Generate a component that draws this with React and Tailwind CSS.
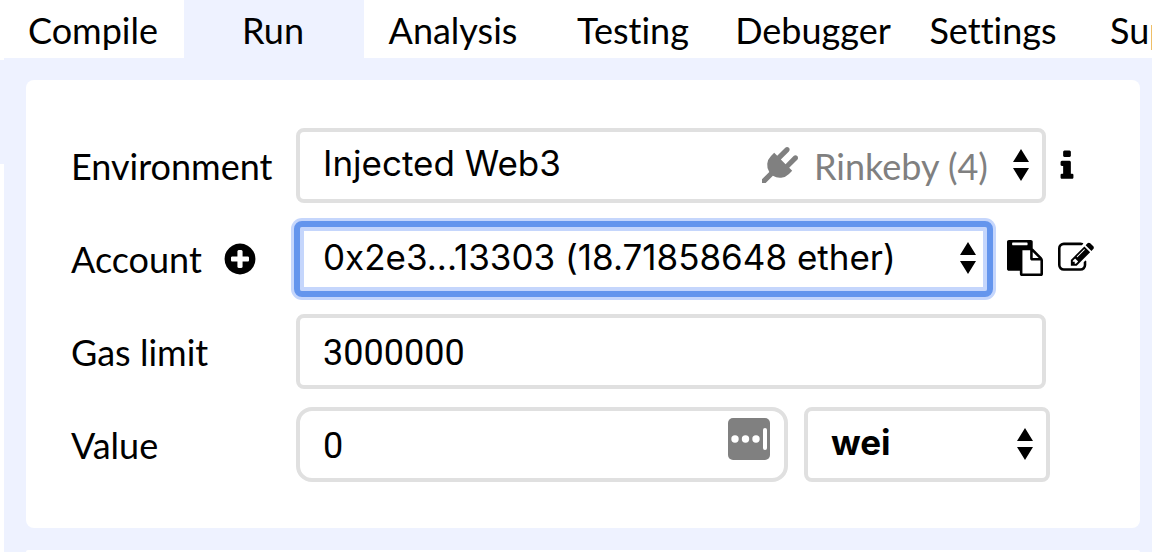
import React from 'react';

const ICONS = {
  info: 'M1216 1344v128q0 26-19 45t-45 19h-512q-26 0-45-19t-19-45v-128q0-26 19-45t45-19h64v-384h-64q-26 0-45-19t-19-45v-128q0-26 19-45t45-19h384q26 0 45 19t19 45v576h64q26 0 45 19t19 45zm-128-1152v192q0 26-19 45t-45 19h-256q-26 0-45-19t-19-45v-192q0-26 19-45t45-19h256q26 0 45 19t19 45z',
  plus: 'M1344 960v-128q0-26-19-45t-45-19h-256v-256q0-26-19-45t-45-19h-128q-26 0-45 19t-19 45v256h-256q-26 0-45 19t-19 45v128q0 26 19 45t45 19h256v256q0 26 19 45t45 19h128q26 0 45-19t19-45v-256h256q26 0 45-19t19-45zm320-64q0 209-103 385.5t-279.5 279.5-385.5 103-385.5-103-279.5-279.5-103-385.5 103-385.5 279.5-279.5 385.5-103 385.5 103 279.5 279.5 103 385.5z',
  plug: 'M1755 453q37 38 37 90.5t-37 90.5l-401 400 150 150-160 160q-163 163-389.5 186.5t-411.5-100.5l-362 362h-181v-181l362-362q-124-185-100.5-411.5t186.5-389.5l160-160 150 150 400-401q38-37 91-37t90 37 37 90.5-37 90.5l-400 401 234 234 401-400q38-37 91-37t90 37z',
  paste: 'M768 1664h896v-640h-416q-40 0-68-28t-28-68v-416h-384v1152zm256-1440v-64q0-13-9.5-22.5t-22.5-9.5h-704q-13 0-22.5 9.5t-9.5 22.5v64q0 13 9.5 22.5t22.5 9.5h704q13 0 22.5-9.5t9.5-22.5zm256 672h299l-299-299v299zm512 128v672q0 40-28 68t-68 28h-960q-40 0-68-28t-28-68v-160h-544q-40 0-68-28t-28-68v-1344q0-40 28-68t68-28h1088q40 0 68 28t28 68v328q21 13 36 28l408 408q28 28 48 76t20 88z',
  edit: 'M888 1184l116-116-152-152-116 116v56h96v96h56zm440-720q-16-16-33 1l-350 350q-17 17-1 33t33-1l350-350q17-17 1-33zm80 594v190q0 119-84.5 203.5t-203.5 84.5h-832q-119 0-203.5-84.5t-84.5-203.5v-832q0-119 84.5-203.5t203.5-84.5h832q63 0 117 25 15 7 18 23 3 17-9 29l-49 49q-14 14-32 8-23-6-45-6h-832q-66 0-113 47t-47 113v832q0 66 47 113t113 47h832q66 0 113-47t47-113v-126q0-13 9-22l64-64q15-15 35-7t20 29zm-96-738l288 288-672 672h-288v-288zm444 132l-92 92-288-288 92-92q28-28 68-28t68 28l152 152q28 28 28 68t-28 68z',
};

function Icon({ name }) {
  return (
    <svg viewBox="0 0 1792 1792" className="block size-9 shrink-0 fill-current" aria-hidden="true">
      <path d={ICONS[name]} />
    </svg>
  );
}

function Arrows() {
  return (
    <svg viewBox="0 0 18 34" className="block h-[34px] w-[18px] shrink-0" aria-hidden="true">
      <path d="M9 1l8 13H1zM9 33L1 20h16z" />
    </svg>
  );
}

const tabs = ['Compile', 'Run', 'Analysis', 'Testing', 'Debugger', 'Settings', 'Support'];
const row = 'flex h-[75px] items-center';
const label = 'w-[224px] shrink-0';
const box = 'h-full w-full appearance-none border-4 border-[#e0e0e0] bg-white px-[23px] outline-none';
const digits = 'font-[Roboto,sans-serif] text-4xl';
const words = 'font-[Inter,sans-serif] text-[35px]';
const overlay = 'pointer-events-none absolute inset-y-0 flex items-center';

export default function App() {
  return (
    <div className="flex h-screen min-h-[552px] overflow-hidden bg-white font-[Lato,sans-serif] text-4xl text-black [font-variant-ligatures:none]">
      <div className="w-1 shrink-0 pt-[60px]">
        <div className="h-[104px] bg-[#eef2ff]" />
      </div>
      <main className="flex min-w-0 flex-1 flex-col overflow-hidden bg-[#eef2ff]">
        <nav className="flex h-[58px] shrink-0 bg-white">
          {tabs.map((tab) => (
            <button
              key={tab}
              type="button"
              className={
                tab === 'Run'
                  ? 'w-[180px] shrink-0 bg-[#eef2ff] pt-0.5 pr-0.5 text-center'
                  : 'w-[180px] shrink-0 pt-0.5 pr-0.5 text-center'
              }
            >
              {tab}
            </button>
          ))}
        </nav>

        <section className="mt-[22px] mr-3 ml-[22px] flex shrink-0 flex-col gap-[18px] rounded-lg bg-white pt-12 pr-[90px] pb-[46px] pl-[45px]">
          <div className={row}>
            <label htmlFor="environment" className={`${label} mr-px`}>Environment</label>
            <div className="relative mr-1 h-full min-w-0 flex-1">
              <select id="environment" className={`${box} ${words} rounded-lg pb-1`}>
                <option>Injected Web3</option>
              </select>
              <div className={`${overlay} right-4 pb-0.5`}>
                <span className="mr-4 text-[#808080]"><Icon name="plug" /></span>
                <span className="mr-6 pt-0.5 text-[#808080]">Rinkeby (4)</span>
                <Arrows />
              </div>
            </div>
            <button type="button" aria-label="Environment help" className="-mr-[90px] w-[90px]">
              <span className="-ml-px block"><Icon name="info" /></span>
            </button>
          </div>

          <div className={row}>
            <div className="flex w-[223px] shrink-0 items-center gap-5">
              <label htmlFor="account">Account</label>
              <button type="button" aria-label="Create account"><Icon name="plus" /></button>
            </div>
            <div className="relative mr-[57px] h-[76px] min-w-0 flex-1">
              <select
                id="account"
                className={`${words} h-full w-full appearance-none rounded-lg border-[6px] border-[#6495ed] bg-white px-[23px] pb-0.5 shadow-[0_0_0_3px_#c5d6fc,inset_0_0_0_4px_#c5d6fc] outline-none`}
              >
                <option>0x2e3...13303 (18.71858648 ether)</option>
              </select>
              <div className={`${overlay} right-4 pb-0.5`}><Arrows /></div>
            </div>
            <div className="-mr-[90px] -ml-[43px] flex w-[133px] shrink-0 gap-[15px] pb-0.5">
              <button type="button" aria-label="Copy account"><Icon name="paste" /></button>
              <button type="button" aria-label="Sign message"><Icon name="edit" /></button>
            </div>
          </div>

          <div className={row}>
            <label htmlFor="gas" className={`${label} mr-px`}>Gas limit</label>
            <div className="mr-1 h-full min-w-0 flex-1">
              <input id="gas" type="text" defaultValue="3000000" className={`${box} ${digits} rounded-lg pt-0.5`} />
            </div>
          </div>

          <div className={row}>
            <label htmlFor="value" className={`${label} mr-px`}>Value</label>
            <div className="relative mr-4 h-full min-w-0 flex-1">
              <input id="value" type="text" defaultValue="0" className={`${box} ${digits} rounded-2xl pt-0.5`} />
              <div className={`${overlay} right-[18px] pb-3`}>
                <svg viewBox="0 0 42 42" className="block size-[42px]" aria-hidden="true">
                  <rect width="42" height="42" rx="5" fill="#808080" />
                  <g fill="white">
                    <circle cx="7" cy="21" r="3.7" />
                    <circle cx="17.5" cy="21" r="3.7" />
                    <circle cx="28" cy="21" r="3.7" />
                    <rect x="35" y="10" width="4" height="22" rx="2" />
                  </g>
                </svg>
              </div>
            </div>
            <div className="relative h-full w-[246px] shrink-0">
              <select aria-label="Value unit" className={`${box} ${words} rounded-lg pb-1 font-bold`}>
                <option>wei</option>
              </select>
              <div className={`${overlay} right-4 pb-0.5`}><Arrows /></div>
            </div>
          </div>
        </section>

        <section className="mt-[22px] mr-3 ml-[22px] min-h-0 flex-1 rounded-t-lg bg-white" />
      </main>
    </div>
  );
}
